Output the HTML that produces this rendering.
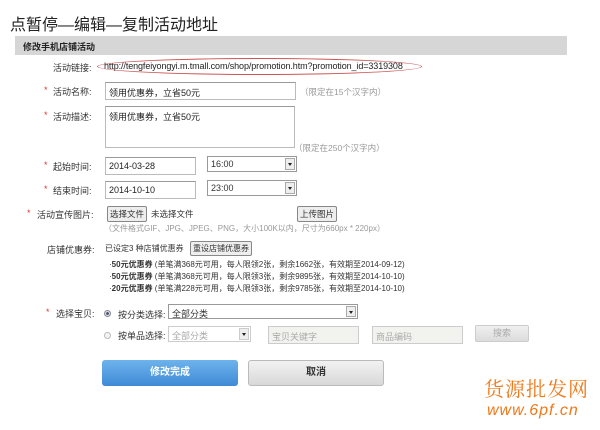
<!DOCTYPE html>
<html><head><meta charset="utf-8"><style>
*{margin:0;padding:0;box-sizing:border-box}
body{width:600px;height:430px;background:#fff;position:relative;overflow:hidden;font-family:"Liberation Sans","Noto Sans CJK SC",sans-serif;font-size:9px;color:#333}
.a{position:absolute;white-space:nowrap}
.lbl{position:absolute;white-space:nowrap;font-size:9px;color:#333}
.st{color:#d33;position:absolute;font-size:9px}
.in{position:absolute;border:1px solid #bbb;border-top-color:#999;background:#fff;font-size:9px;padding:3px 3px;color:#222}
.hint{position:absolute;color:#999;font-size:8.5px;white-space:nowrap}
.sel{position:absolute;border:1px solid #999;background:#fff;font-size:9px;padding:2px 3px}
.sel i{position:absolute;right:1px;top:1px;bottom:1px;width:10px;border:1px solid #aaa;background:#eee}
.sel i:after{content:"";position:absolute;left:2px;top:4px;border:2px solid transparent;border-top:3px solid #222}
.btn{position:absolute;border:1px solid #888;background:#eee;font-size:8.5px;padding:1px 2px;border-radius:2px}
.dis{background:#f2f2ee;border-color:#ccc;color:#aaa}
</style></head><body>
<div class="a" style="left:10px;top:11px;font-size:16px;color:#222">点暂停—编辑—复制活动地址</div>
<div class="a" style="left:15px;top:36px;width:552px;height:19px;background:#d6d6d6"></div>
<div class="a" style="left:23px;top:40px;font-weight:bold;font-size:9px;color:#222">修改手机店铺活动</div>

<div class="lbl" style="left:53px;top:61px">活动链接:</div>
<div class="a" style="left:104px;top:61px;font-size:9px;color:#222;letter-spacing:-0.1px">http://tengfeiyongyi.m.tmall.com/shop/promotion.htm?promotion_id=3319308</div>
<div class="a" style="left:97px;top:58px;width:325px;height:17px;border:1px solid #c55;border-radius:50%"></div>

<span class="st" style="left:44px;top:85px">*</span><div class="lbl" style="left:53px;top:85px">活动名称:</div>
<div class="in" style="left:105px;top:82px;width:191px;height:18px">领用优惠券，立省50元</div>
<div class="hint" style="left:300px;top:86px">（限定在15个汉字内）</div>

<span class="st" style="left:44px;top:110px">*</span><div class="lbl" style="left:53px;top:110px">活动描述:</div>
<div class="in" style="left:105px;top:106px;width:190px;height:42px">领用优惠券，立省50元</div>
<div class="hint" style="left:294px;top:142px">（限定在250个汉字内）</div>

<span class="st" style="left:44px;top:160px">*</span><div class="lbl" style="left:53px;top:160px">起始时间:</div>
<div class="in" style="left:105px;top:157px;width:91px;height:18px">2014-03-28</div>
<div class="sel" style="left:207px;top:156px;width:90px;height:16px">16:00<i></i></div>

<span class="st" style="left:44px;top:184px">*</span><div class="lbl" style="left:53px;top:184px">结束时间:</div>
<div class="in" style="left:105px;top:181px;width:91px;height:18px">2014-10-10</div>
<div class="sel" style="left:207px;top:180px;width:90px;height:16px">23:00<i></i></div>

<span class="st" style="left:27px;top:208px">*</span><div class="lbl" style="left:37px;top:208px">活动宣传图片:</div>
<div class="btn" style="left:107px;top:206px">选择文件</div>
<div class="a" style="left:151px;top:208px;font-size:8.5px">未选择文件</div>
<div class="btn" style="left:297px;top:206px">上传图片</div>
<div class="hint" style="left:104px;top:223px;font-size:8px">（文件格式GIF、JPG、JPEG、PNG，大小100K以内，尺寸为660px * 220px）</div>

<div class="lbl" style="left:47px;top:243px">店铺优惠券:</div>
<div class="a" style="left:105px;top:243px;font-size:8px">已设定3 种店铺优惠券</div>
<div class="btn" style="left:190px;top:241px;font-size:8px">重设店铺优惠券</div>
<div class="a" style="left:109px;top:259px;line-height:12px;font-size:8px">·<b>50元优惠券</b> (单笔满368元可用，每人限领2张，剩余1662张，有效期至2014-09-12)<br>·<b>50元优惠券</b> (单笔满368元可用，每人限领3张，剩余9895张，有效期至2014-10-10)<br>·<b>20元优惠券</b> (单笔满228元可用，每人限领3张，剩余9785张，有效期至2014-10-10)</div>

<span class="st" style="left:46px;top:307px">*</span><div class="lbl" style="left:56px;top:307px">选择宝贝:</div>
<div class="a" style="left:104px;top:310px;width:7px;height:7px;border-radius:50%;border:1px solid #889;background:radial-gradient(#456 35%,#dde 45%)"></div>
<div class="a" style="left:118px;top:308px">按分类选择:</div>
<div class="sel" style="left:168px;top:304px;width:190px;height:15px">全部分类<i></i></div>
<div class="a" style="left:104px;top:332px;width:7px;height:7px;border-radius:50%;border:1px solid #bbb;background:#f4f4f4"></div>
<div class="a" style="left:118px;top:329px">按单品选择:</div>
<div class="sel dis" style="left:168px;top:326px;width:83px;height:16px;background:#fff">全部分类<i style="border-color:#ccc"></i></div>
<div class="in dis" style="left:268px;top:326px;width:91px;height:18px">宝贝关键字</div>
<div class="in dis" style="left:372px;top:326px;width:91px;height:18px">商品编码</div>
<div class="a" style="left:475px;top:325px;width:54px;height:17px;border:1px solid #ccc;border-radius:2px;background:linear-gradient(#f0f0f0,#dcdcdc);color:#aaa;text-align:center;line-height:15px">搜索</div>

<div class="a" style="left:102px;top:360px;width:136px;height:26px;border-radius:3px;background:linear-gradient(#6db3ec,#3f8ad6);color:#fff;font-weight:bold;font-size:10px;text-align:center;line-height:26px">修改完成</div>
<div class="a" style="left:248px;top:360px;width:136px;height:26px;border-radius:3px;border:1px solid #bbb;background:linear-gradient(#f2f2f2,#d8d8d8);color:#333;font-weight:bold;font-size:10px;text-align:center;line-height:24px">取消</div>

<div class="a" style="left:484px;top:373px;font-size:20px;color:#f07818;font-family:'Noto Serif CJK SC',serif;letter-spacing:1px">货源批发网</div>
<div class="a" style="left:487px;top:402px;font-size:16px;color:#f07818;font-style:italic;letter-spacing:1px">www.6pf.cn</div>
</body></html>
